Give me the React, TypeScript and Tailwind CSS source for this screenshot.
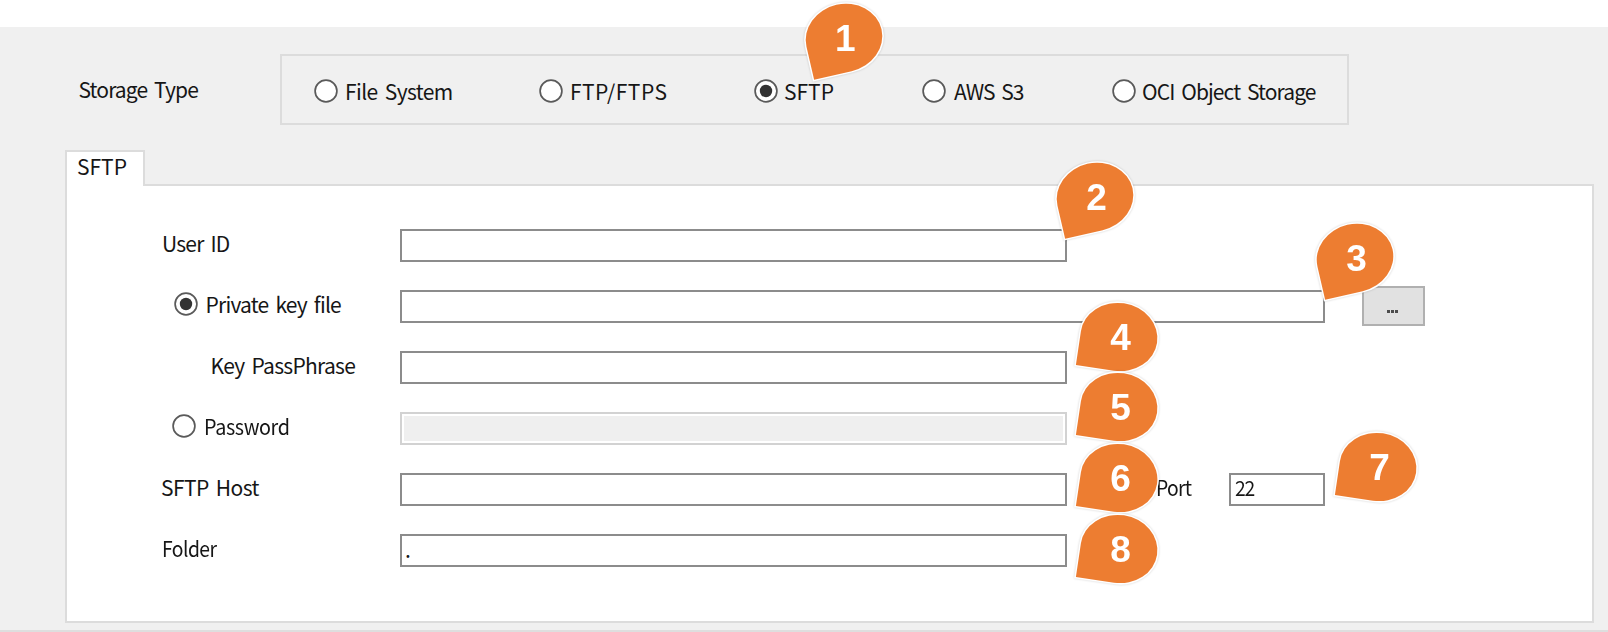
import React from "react";
import clsx from "clsx";

function Radio({ checked = false }: { checked?: boolean }) {
  return (
    <svg viewBox="0 0 24 24" className="h-6 w-6 shrink-0">
      <circle cx="12" cy="12" r="10.9" fill="#fff" stroke="#5a5a5a" strokeWidth="1.7" />
      {checked && <circle cx="12" cy="12" r="6.2" fill="#333" />}
    </svg>
  );
}

function Text({ className, children }: { className?: string; children: React.ReactNode }) {
  return (
    <span className={clsx("block w-max origin-left whitespace-pre text-[21px] leading-6 text-[#161616] [word-spacing:3px]", className)}>
      {children}
    </span>
  );
}

function Field({ className, disabled, children }: { className: string; disabled?: boolean; children?: React.ReactNode }) {
  return (
    <div
      className={clsx(
        "h-[33px] shrink-0 border-2",
        disabled ? "border-[#d2d2d2] bg-[#efefef] ring-2 ring-white ring-inset" : "border-[#8c8c8c] bg-white",
        className
      )}
    >
      {children}
    </div>
  );
}

function Row({ label, children }: { label: React.ReactNode; children: React.ReactNode }) {
  return (
    <div className="flex h-[33px] items-start">
      <div className="flex w-[333px] shrink-0 items-center pt-[2px]">{label}</div>
      {children}
    </div>
  );
}

function Balloon({ n, angle, digitX, digitY, className }: { n: number; angle: number; digitX: number; digitY: number; className: string }) {
  return (
    <svg viewBox="-50 -50 100 100" className={clsx("absolute h-[100px] w-[100px] drop-shadow-[0_0_1px_rgba(0,0,0,0.18)]", className)}>
      <path
        d="M0 -34 A38.5 34 0 0 1 38.5 0 A38.5 34 0 0 1 0 34 L-38.5 34 L-38.5 0 A38.5 34 0 0 1 0 -34 Z"
        transform={`rotate(${angle})`}
        fill="#ed7d31"
        stroke="#fff"
        strokeWidth="3"
        paintOrder="stroke"
      />
      <text x={digitX} y={digitY} textAnchor="middle" fill="#fff" className="font-['Liberation_Sans',Arial,sans-serif] text-[37px] font-bold">
        {n}
      </text>
    </svg>
  );
}

export default function App() {
  return (
    <div className="relative flex h-[632px] w-[1608px] flex-col overflow-hidden bg-white pt-[27px] font-['Noto_Sans_CJK_JP',sans-serif]">
      <div className="flex flex-1 flex-col border-b-2 border-[#dedede] bg-[#f0f0f0]">
        <div className="flex h-[123px] items-start pt-[27px]">
          <div className="w-[280px] shrink-0 pt-[23px] pl-[78.5px]">
            <Text className="tracking-[-0.88px]">Storage Type</Text>
          </div>
          <div className="grid h-[71px] w-[1069px] grid-cols-[225px_215px_168px_190px_1fr] items-center border-2 border-[#dcdcdc] pt-[3px] pl-[31.5px]">
            <div className="flex items-center gap-[7.5px]">
              <Radio />
              <Text className="tracking-[-0.59px]">File System</Text>
            </div>
            <div className="flex items-center gap-[7.5px]">
              <Radio />
              <Text className="tracking-[0.47px]">FTP/FTPS</Text>
            </div>
            <div className="flex items-center gap-[6.5px]">
              <Radio checked />
              <Text>SFTP</Text>
            </div>
            <div className="flex items-center gap-[8.5px]">
              <Radio />
              <Text className="tracking-[-1.02px]">AWS S3</Text>
            </div>
            <div className="flex items-center gap-[6.5px]">
              <Radio />
              <Text className="tracking-[-0.9px]">OCI Object Storage</Text>
            </div>
          </div>
        </div>

        <div className="ml-[65px] flex flex-col items-start">
          <div className="relative z-10 -mb-[2px] h-[36px] w-[80px] border-2 border-b-0 border-[#dcdcdc] bg-white pt-[2px] pl-[10px]">
            <Text>SFTP</Text>
          </div>
          <div className="flex h-[439px] w-[1529px] flex-col gap-[28.1px] border-2 border-[#dcdcdc] bg-white pt-[43px]">
            <Row label={<Text className="ml-[95px] tracking-[-0.79px]">User ID</Text>}>
              <Field className="w-[667px]" />
            </Row>
            <Row
              label={
                <div className="ml-[107px] flex items-center gap-[7.5px]">
                  <Radio checked />
                  <Text className="tracking-[-0.78px]">Private key file</Text>
                </div>
              }
            >
              <Field className="w-[925px]" />
              <div className="-mt-[4px] ml-[37px] flex h-[40px] w-[63px] shrink-0 justify-center border-2 border-[#b0b0b0] bg-[#e1e1e1]">
                <div className="mt-[22px] -ml-[2px] flex h-[3px] gap-px">
                  <i className="h-[3px] w-[3px] bg-[#4c4c4c]" />
                  <i className="h-[3px] w-[3px] bg-[#4c4c4c]" />
                  <i className="h-[3px] w-[3px] bg-[#4c4c4c]" />
                </div>
              </div>
            </Row>
            <Row label={<Text className="ml-[143.5px] tracking-[-0.7px]">Key PassPhrase</Text>}>
              <Field className="w-[667px]" />
            </Row>
            <Row
              label={
                <div className="ml-[105px] flex items-center gap-[8px]">
                  <Radio />
                  <Text className="scale-x-[0.94] tracking-[-0.4px]">Password</Text>
                </div>
              }
            >
              <Field className="w-[667px]" disabled />
            </Row>
            <Row label={<Text className="ml-[94px] tracking-[-0.58px]">SFTP Host</Text>}>
              <Field className="w-[667px]" />
              <div className="w-[162px] shrink-0 pt-[2px] pl-[89px]">
                <Text className="scale-x-[0.92] tracking-[-0.76px]">Port</Text>
              </div>
              <Field className="w-[96px] pl-[4px]">
                <Text className="scale-x-[0.92] tracking-[-1.2px]">22</Text>
              </Field>
            </Row>
            <Row label={<Text className="ml-[95px] scale-x-[0.92] tracking-[-0.6px]">Folder</Text>}>
              <Field className="w-[667px] pl-[3px]">
                <Text className="pt-px text-[17px]">.</Text>
              </Field>
            </Row>
          </div>
        </div>
      </div>

      <Balloon n={1} angle={-13} digitX={1.2} digitY={12.9} className="top-[-12px] left-[794px]" />
      <Balloon n={2} angle={-13} digitX={1.6} digitY={12.9} className="top-[147px] left-[1045px]" />
      <Balloon n={3} angle={-13} digitX={1.6} digitY={12.7} className="top-[208px] left-[1305px]" />
      <Balloon n={4} angle={8.5} digitX={1.6} digitY={13.3} className="top-[287px] left-[1069px]" />
      <Balloon n={5} angle={8.5} digitX={1.6} digitY={13.3} className="top-[357px] left-[1069px]" />
      <Balloon n={6} angle={8.5} digitX={1.6} digitY={13.3} className="top-[428px] left-[1069px]" />
      <Balloon n={7} angle={8.5} digitX={1.6} digitY={13.3} className="top-[417px] left-[1328px]" />
      <Balloon n={8} angle={8.5} digitX={1.6} digitY={13.3} className="top-[499px] left-[1069px]" />
    </div>
  );
}
